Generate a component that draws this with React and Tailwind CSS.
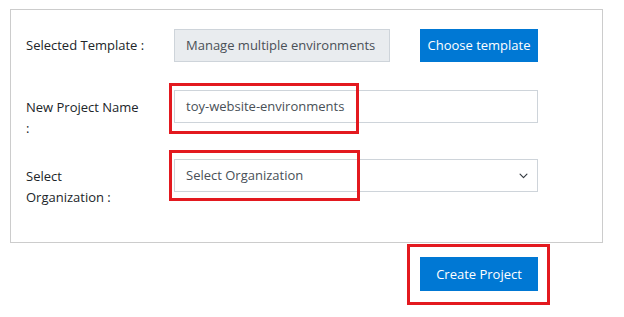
export default function App() {
  const font = { fontFamily: '"Open Sans", "Noto Sans", sans-serif' };
  return (
    <div className="w-[624px] h-[317px] bg-white relative" style={font}>
      <div className="absolute left-[10px] top-[9px] w-[593px] h-[234px] border border-[#cccccc]" />
      <div className="relative pl-[26px] pt-[29px] text-[13px] leading-[21px] text-[#212529] whitespace-nowrap">
        <div className="flex items-start h-[33px]">
          <div className="w-[148px] shrink-0 pt-[6px]">Selected Template :</div>
          <div className="w-[216px] h-[33px] flex items-center px-[11px] bg-[#e9ecef] border border-[#ced4da] text-[#495057]">
            Manage multiple environments
          </div>
          <div className="ml-[30px] w-[118px] h-[33px] flex items-center justify-center bg-[#0078d4] text-white">
            Choose template
          </div>
        </div>
        <div className="flex items-start mt-[28px]">
          <div className="w-[148px] shrink-0 pt-[7px]">
            <div>New Project Name</div>
            <div>:</div>
          </div>
          <div className="w-[364px] h-[33px] flex items-center px-[11px] border border-[#ced4da] text-[#495057]">
            toy-website-environments
          </div>
        </div>
        <div className="flex items-start mt-[20px]">
          <div className="w-[148px] shrink-0 pt-[7px]">
            <div>Select</div>
            <div>Organization :</div>
          </div>
          <div className="w-[364px] h-[33px] flex items-center justify-between pl-[11px] pr-[8px] border border-[#ced4da] text-[#495057]">
            <span>Select Organization</span>
            <svg width="11" height="11" viewBox="0 0 16 16" fill="none" stroke="#343a40" strokeWidth="1.7" strokeLinecap="round" strokeLinejoin="round">
              <path d="M3 6l5 5 5-5" />
            </svg>
          </div>
        </div>
        <div className="flex mt-[49px] pl-[394px]">
          <div className="w-[118px] h-[34px] flex items-center justify-center bg-[#0078d4] text-white">
            Create Project
          </div>
        </div>
      </div>
      <div className="absolute left-[169px] top-[83px] w-[190px] h-[51px] border-[3px] border-[#e3191f]" />
      <div className="absolute left-[169px] top-[150px] w-[191px] h-[51px] border-[3px] border-[#e3191f]" />
      <div className="absolute left-[407px] top-[244px] w-[143px] h-[61px] border-[3px] border-[#e3191f]" />
    </div>
  );
}
